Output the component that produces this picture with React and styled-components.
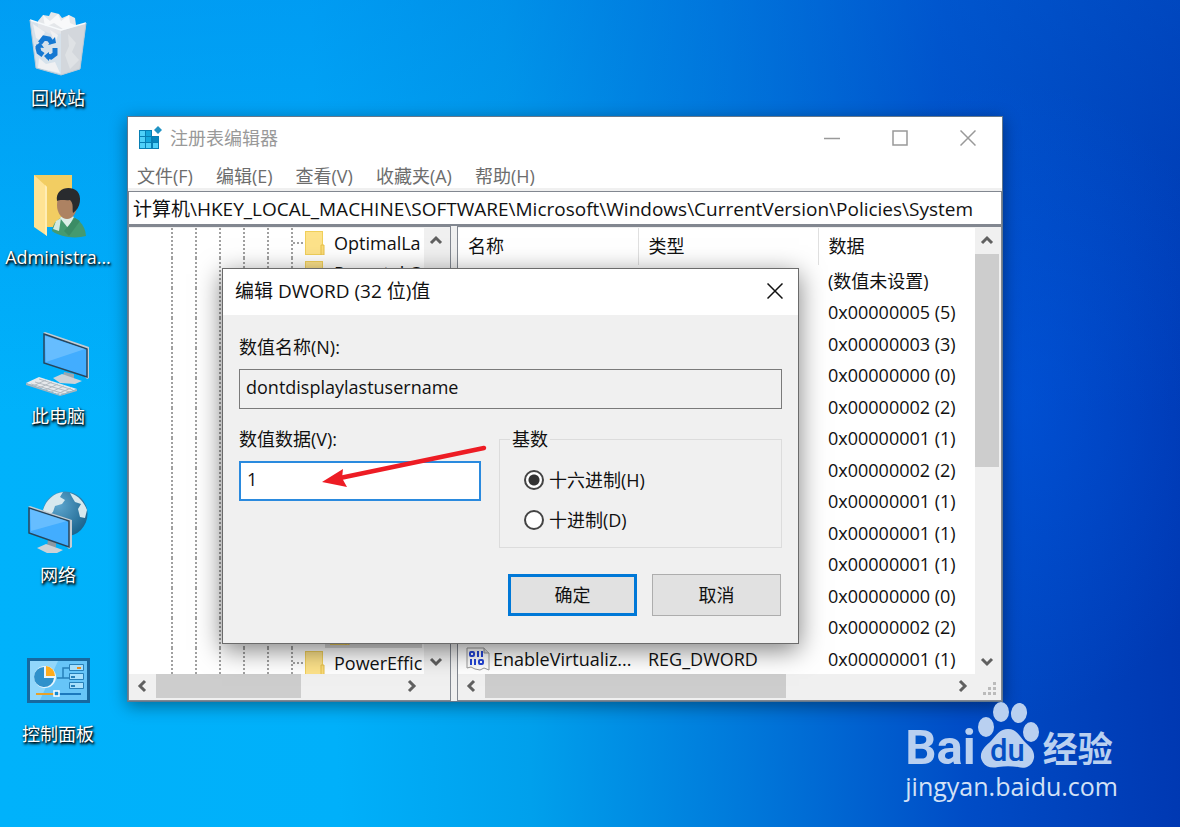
import React, { useState } from "react";
import styled, { createGlobalStyle } from "styled-components";

const GlobalStyle = createGlobalStyle`
  * {
    box-sizing: border-box;
  }
  body {
    margin: 0;
    font-family: "Open Sans", "Noto Sans CJK SC", sans-serif;
    font-size: 18px;
    line-height: 24px;
    color: #111;
  }
  button, input {
    font: inherit;
    color: inherit;
  }
`;

const Desktop = styled.div`
  position: relative;
  min-height: 100vh;
  overflow: hidden;
  background:
    radial-gradient(ellipse 240px 320px at 1010px 400px, rgba(0, 96, 240, 0.4), transparent),
    linear-gradient(180deg, rgba(0, 110, 225, 0.3), transparent 50%),
    linear-gradient(88deg, #00b2fb 0%, #00b0fa 28%, #00a0ec 44%, #0078da 62%, #004cc6 80%, #0036b0 100%);
`;

const Shortcuts = styled.nav`
  display: flex;
  flex-direction: column;
  width: 116px;
  padding-top: 12px;
`;

const Shortcut = styled.button`
  display: flex;
  flex-direction: column;
  align-items: center;
  gap: 10px;
  height: 159px;
  padding: 0;
  border: 0;
  background: none;
  color: #fff;
  white-space: nowrap;
  text-shadow: 1px 1px 2px #000, 1px 2px 3px #000;
`;

const Window = styled.section`
  position: absolute;
  left: 127px;
  top: 116px;
  width: min(876px, calc(100vw - 135px));
  border: 1px solid #64788c;
  background: #f0f0f0;
  box-shadow: 0 4px 16px rgba(0, 0, 0, 0.4);
`;

const TitleBar = styled.header`
  display: flex;
  align-items: center;
  height: 43px;
  padding: 0 0 2px 10px;
  background: #fff;
  color: #999;
`;

const Title = styled.h1`
  flex: 1;
  margin: 0;
  padding-left: 8px;
  font-size: 18px;
  font-weight: 400;
`;

const CaptionButton = styled.button`
  display: grid;
  place-items: center;
  width: 68px;
  height: 40px;
  padding: 0;
  border: 0;
  background: none;
  color: ${(props) => (props.$dark ? "#111" : "#999")};
`;

const MenuBar = styled.div`
  display: flex;
  gap: 23px;
  height: 31px;
  padding: 4px 9px 0;
  border-bottom: 3px solid #f0f0f0;
  background: #fff;
`;

const MenuItem = styled.button`
  padding: 0;
  border: 0;
  background: none;
  color: #6d6d6d;
  line-height: 24px;
  white-space: nowrap;
`;

const Address = styled.input`
  display: block;
  width: 100%;
  height: 35px;
  padding: 0 4px;
  border: 1px solid #828790;
  border-bottom-width: 2px;
  outline: 0;
  background: #fff;
  font-size: 19px;
`;

const Panes = styled.div`
  display: grid;
  grid-template-columns: 323fr 545fr;
  gap: 6px;
`;

const Pane = styled.div`
  display: grid;
  grid-template-columns: 1fr 24px;
  grid-template-rows: 1fr 24px;
  min-width: 0;
  padding: 1px 2px 2px 0;
  border: 1px solid #828790;
  background: #f0f0f0;
`;

const Tree = styled.ul`
  contain: size;
  margin: 0;
  padding: 0;
  border-right: 2px solid #fff;
  overflow: hidden;
  background: #fff;
  list-style: none;
`;

const Branch = styled.li`
  display: flex;
  align-items: center;
  height: 30px;
  overflow: hidden;
  white-space: nowrap;
`;

const Guide = styled.span`
  flex: none;
  align-self: stretch;
  width: 24px;
  border-left: 2px dotted #a0a0a0;
  &:first-child {
    margin-left: 42px;
  }
`;

const Twig = styled.span`
  flex: none;
  width: 10px;
  margin-left: -22px;
  border-top: 2px dotted #a0a0a0;
`;

const Node = styled.span`
  display: flex;
  align-items: center;
  gap: 9px;
  flex: 1 0 auto;
  align-self: stretch;
  margin-left: ${(props) => (props.$child ? "10px" : "0")};
  padding-left: ${(props) => (props.$child ? "5px" : "2px")};
  background: ${(props) => (props.$selected ? "#d9d9d9" : "none")};
`;

const ListArea = styled.div`
  overflow: hidden;
  background: #fff;
`;

const ValueTable = styled.table`
  width: 100%;
  table-layout: fixed;
  border-collapse: collapse;
  white-space: nowrap;

  th {
    height: 37px;
    padding: 0 10px 2px;
    border-right: 1px solid #e0e0e0;
    font-weight: 400;
    text-align: left;
  }
  th:last-child {
    border-right: 0;
  }
  th:nth-child(-n + 2) {
    width: 180px;
  }
  td {
    height: 31px;
    padding: 0 0 0 10px;
    overflow: hidden;
  }
  tr:nth-child(even) td {
    height: 32px;
  }
  td:first-child {
    padding-left: 8px;
  }
`;

const ValueName = styled.span`
  display: flex;
  align-items: center;
  gap: 3px;
`;

const Scroll = styled.div`
  display: flex;
  flex-direction: ${(props) => (props.$vertical ? "column" : "row")};
  background: #f0f0f0;
`;

const ScrollButton = styled.button`
  display: grid;
  place-items: center;
  flex: none;
  width: ${(props) => (props.$vertical ? "24px" : "27px")};
  height: ${(props) => (props.$vertical ? "26px" : "24px")};
  padding: 0;
  border: 0;
  background: none;
  color: #606060;
`;

const Track = styled.div`
  flex: 1;
`;

const Thumb = styled.div`
  width: ${(props) => (props.$vertical ? "100%" : props.$size)};
  height: ${(props) => (props.$vertical ? props.$size : "100%")};
  background: #cdcdcd;
`;

const Corner = styled.div`
  display: grid;
  place-items: end;
  padding: 2px;
`;

const Dialog = styled.form`
  position: absolute;
  left: 222px;
  top: 268px;
  width: 577px;
  border: 1px solid #6b6b6b;
  background: #f0f0f0;
  box-shadow: 0 6px 24px rgba(0, 0, 0, 0.5);
`;

const DialogTitle = styled.header`
  display: flex;
  align-items: center;
  height: 46px;
  padding: 0 0 2px 12px;
  background: #fff;
  h2 {
    flex: 1;
    margin: 0;
    font-size: 19px;
    font-weight: 400;
  }
  button {
    width: 46px;
  }
`;

const DialogBody = styled.div`
  display: flex;
  flex-direction: column;
  gap: 18px;
  padding: 20px 16px 27px;
`;

const Field = styled.div`
  display: flex;
  flex-direction: column;
  gap: 10px;
`;

const TextBox = styled.input`
  width: 100%;
  height: 40px;
  padding: 0 6px 5px;
  border: ${(props) => (props.readOnly ? "1px solid #7a7a7a" : "2px solid #2a8ade")};
  outline: 0;
  background: ${(props) => (props.readOnly ? "#f0f0f0" : "#fff")};
`;

const Columns = styled.div`
  display: grid;
  grid-template-columns: 242fr 283fr;
  gap: 18px;
`;

const Group = styled.fieldset`
  min-width: 0;
  margin: 0;
  padding: 9px 10px 7px;
  border: 1px solid #dcdcdc;
  legend {
    padding: 0 2px;
  }
`;

const RadioLabel = styled.label`
  display: flex;
  align-items: center;
  gap: 5px;
  height: 40px;
  padding-left: 14px;
`;

const Radio = styled.input.attrs({ type: "radio" })`
  appearance: none;
  width: 20px;
  height: 20px;
  margin: 0;
  border: 2px solid #444;
  border-radius: 50%;
  background: #fff;
  &:checked {
    background: radial-gradient(circle, #333 5px, #fff 6px);
  }
`;

const Buttons = styled.div`
  display: flex;
  justify-content: flex-end;
  gap: 15px;
  padding: 8px 1px 0;
`;

const PushButton = styled.button`
  width: 129px;
  height: 42px;
  padding: 0;
  border: ${(props) => (props.$primary ? "3px solid #0078d7" : "1px solid #adadad")};
  background: #e1e1e1;
`;

const Arrow = styled.svg`
  position: absolute;
  left: 320px;
  top: 442px;
  pointer-events: none;
`;

const Watermark = styled.div`
  position: absolute;
  right: 62px;
  bottom: 24px;
  color: #b9d0f0;
`;

const Brand = styled.div`
  display: flex;
  align-items: flex-end;
  height: 67px;
  font: 700 49px/42px Roboto, "Noto Sans CJK SC", sans-serif;
  svg {
    margin: 0 3px 0 2px;
  }
`;

const BrandCn = styled.span`
  font-size: 35px;
  line-height: 36px;
`;

const SiteLink = styled.a`
  display: block;
  color: #d3e1f6;
  font-size: 25px;
  line-height: 34px;
  text-decoration: none;
`;

const BinIcon = () => (
  <svg width="64" height="64" viewBox="0 0 64 64" aria-hidden="true">
    <path d="M12 9 17 3l6 1 2-4 8 2 3 4 7-3 6 3 1 7 6 3-5 5-26 1-13-6z" fill="#e4e7ea" />
    <path d="m17 3 7 6 8-7 3 7 8-6 1 8 7 3-14 3-9-6-9 4z" fill="#f8f9fa" />
    <path d="m4 8 31 11 25-8-6 46-19 6-25-7z" fill="#e3e6ea" opacity=".94" />
    <path d="m35 19 25-8-6 46-19 6z" fill="#d3d7dc" />
    <path d="m7 12 12 8-4 9-5-3zM24 18l8 5-3 9zM13 46l7 6 9-2 5 11-22-5z" fill="#f0f1f3" />
    <path d="m42 22 8 9-4 9 7 8-9 9-5-14 4-9z" fill="#dfe2e5" />
    <path d="m4 8 31 10 25-7" fill="none" stroke="#f7fafc" strokeWidth="1.500" />
    <path d="m4 8 6 48 25 7 19-6 6-46" fill="none" stroke="#b9c9d6" strokeWidth="1" />
    <g fill="none" stroke="#1478d2" strokeWidth="5">
      <path d="m14 31 4-5 5 1 3 4" />
      <path d="m29 36 0 6-4 3-4-1" />
      <path d="m17 43-4-3-1-4 1-3" />
    </g>
    <path d="m22 33 8-2-1-6zM23 40l-5 4 5 5zM9 35l5-5 4 6z" fill="#1478d2" />
  </svg>
);

const UserFolderIcon = () => (
  <svg width="64" height="64" viewBox="0 0 64 64" overflow="visible" aria-hidden="true">
    <path d="M8 4h38v52H8z" fill="#f2cd62" />
    <path d="m8 4 13 12v49L8 56z" fill="#ffe394" />
    <path d="m19 14 2 2v49l-2-2z" fill="#ffedb5" />
    <path d="M26 60c1-10 8-13 15-16 10 3 18 8 19 21-11 3-26 1-34-5z" fill="#459a70" />
    <path d="m34 47 8 10 6-11-5-3-6 1z" fill="#dceee8" />
    <path d="m27 58 3-8 5-3-2 13z" fill="#d2e9e2" />
    <path d="m38 60 11-13 5 3-11 15z" fill="#3b8c65" />
    <ellipse cx="41" cy="34" rx="10" ry="14" fill="#ad8262" />
    <path d="M31 30c-2-13 13-16 20-10 5 5 4 17-4 22-1-5 1-9-3-13-4 1-9-1-13 1z" fill="#292b2e" />
  </svg>
);

const Screen = ({ points, shine }) => (
  <>
    <polygon points={points} fill="#42adff" stroke="#27465d" strokeWidth="1.500" />
    <polygon points={shine} fill="#7ac6ff" opacity=".65" />
  </>
);

const ComputerIcon = () => (
  <svg width="64" height="64" viewBox="0 0 64 64" overflow="visible" aria-hidden="true">
    <path d="m38 42 10 2v6H36z" fill="#9ca7b0" />
    <path d="m27 48 9-4 20 7-7 3-15-1z" fill="#ced3d8" />
    <path d="m17 3 2-1 44 15v31l-2 1z" fill="#c4cdd4" />
    <Screen points="18,4 61,19 61,47 18,33" shine="19,6 59,19 20,32" />
    <path d="m0 53 13-6 38 12-17 6z" fill="#e6e9ec" />
    <path d="m0 53 34 12 17-6v2l-17 5L0 55z" fill="#aab4bc" />
    <path d="m5 54 34 10M9 52l35 10M13 49l34 11M7 56l13-6m-7 8 13-6m-7 8 13-6m-7 8 13-6m-7 8 14-6" stroke="#b3bbc2" strokeWidth="1" />
  </svg>
);

const NetworkIcon = () => (
  <svg width="64" height="64" viewBox="0 0 64 64" aria-hidden="true">
    <defs>
      <radialGradient id="globe" cx=".35" cy=".3" r=".8">
        <stop offset="0" stopColor="#5da6cf" />
        <stop offset="1" stopColor="#175f88" />
      </radialGradient>
    </defs>
    <circle cx="39" cy="25" r="22.500" fill="url(#globe)" />
    <path d="M17 21C20 11 28 4 37 3l-3 5 5 3-3 4-7 2-2 6-5 4zM44 4c9 3 14 9 17 17l-2 8-5-1-2-8 3-5-6-2-3-5zM28 26l6 2-4 4z" fill="#d6e8ee" />
    <path d="m22 50 8 2v6h-9z" fill="#8b99a3" />
    <path d="m11 59 9-4 17 6-6 3H21z" fill="#ccd2d7" />
    <path d="m2 18 2-1 42 14v27l-3 2z" fill="#c4cdd4" />
    <Screen points="3,19 43,32 43,58 3,44" shine="4,20 41,32 5,42" />
  </svg>
);

const ControlPanelIcon = () => (
  <svg width="64" height="64" viewBox="0 0 64 64" aria-hidden="true">
    <path d="M1 10h63v45H1z" fill="#1769a0" />
    <path d="M4 13h57v39H4z" fill="#67c5f8" />
    <path d="M4 13h28L14 52H4z" fill="#91d7fb" />
    <circle cx="19" cy="29" r="11" fill="#e6f5fd" />
    <path d="M18 19a10 10 0 1 0 10 11H18z" fill="#2f91cb" />
    <path d="M20 18a10 10 0 0 1 9 10h-9z" fill="#ffac1c" />
    <path d="M31 30h6V20h6m-6 10h6" fill="none" stroke="#2780b9" strokeWidth="1.500" />
    <g fill="#a7e0fc" stroke="#2780b9">
      <path d="M43.500 16.500h14v6h-14zM43.500 25.500h14v6h-14zM43.500 34.500h14v6h-14z" />
    </g>
    <path d="M51 20h4" stroke="#e98b1f" strokeWidth="2" />
    <path d="M45 29h4m-4 9h4" stroke="#2780b9" strokeWidth="2" />
    <path d="M10 46h20" stroke="#e7a129" strokeWidth="2" />
    <path d="M32 46h23" stroke="#1a78bd" strokeWidth="2" />
    <path d="M28 43h5v5h-5z" fill="#168bd3" stroke="#fff" strokeWidth="1.500" />
  </svg>
);

const RegeditIcon = () => (
  <svg width="24" height="24" viewBox="0 0 24 24" aria-hidden="true">
    <path d="M1 4h13v6h7v13H1z" fill="#087fb4" />
    <path d="M2 5h5v5H2zM2 11h5v5H2zM2 17h5v5H2zM8 17h5v5H8zM15 17h5v5h-5z" fill="#4fd0f8" />
    <path d="M8 5h5v5H8zM8 11h5v5H8z" fill="#15a7dc" />
    <path d="M15 11h5v5h-5z" fill="#0786bd" />
    <path d="m20 0 4 4-4 4-4-4z" fill="#2193c4" />
  </svg>
);

const FolderIcon = () => (
  <svg width="20" height="24" viewBox="0 0 20 24" aria-hidden="true">
    <path d="M0 0h18v24H0z" fill="#f0cf5a" />
    <path d="M1 1h16v22H1z" fill="#fde28a" />
    <path d="M16 14h3v10h-3z" fill="#fbdc78" stroke="#e6c04a" />
  </svg>
);

// little page with two rows of bits
const BinaryIcon = () => (
  <svg width="24" height="24" viewBox="0 0 24 24" aria-hidden="true">
    <path d="M1 1h17l5 5v17l-5-2-4 2-5-1-4-2-4 1z" fill="#fff" stroke="#9a9a9a" />
    <path d="M18 1v5h5" fill="#ddd" stroke="#9a9a9a" />
    <g fill="none" stroke="#2546d8" strokeWidth="2">
      <rect x="4" y="5" width="4" height="4" rx="1" />
      <path d="M12 4v6m4-6v6M5 12v6m4-6v6" />
      <rect x="13" y="13" width="4" height="4" rx="1" />
    </g>
  </svg>
);

const CloseGlyph = () => (
  <svg width="16" height="16" viewBox="0 0 16 16" aria-hidden="true">
    <path d="m.5.5 15 15m0-15-15 15" stroke="currentColor" strokeWidth="1.500" />
  </svg>
);

const chevrons = {
  up: "m2 9 5-5 5 5",
  down: "m2 5 5 5 5-5",
  left: "m9 2-5 5 5 5",
  right: "m5 2 5 5-5 5",
};

const Chevron = ({ dir }) => (
  <svg width="14" height="14" viewBox="0 0 14 14" aria-hidden="true">
    <path d={chevrons[dir]} fill="none" stroke="currentColor" strokeWidth="3" />
  </svg>
);

const ScrollBar = ({ vertical, size }) => (
  <Scroll $vertical={vertical}>
    <ScrollButton type="button" $vertical={vertical} aria-label={vertical ? "向上滚动" : "向左滚动"}>
      <Chevron dir={vertical ? "up" : "left"} />
    </ScrollButton>
    <Track>{size && <Thumb $vertical={vertical} $size={size} />}</Track>
    <ScrollButton type="button" $vertical={vertical} aria-label={vertical ? "向下滚动" : "向右滚动"}>
      <Chevron dir={vertical ? "down" : "right"} />
    </ScrollButton>
  </Scroll>
);

const shortcuts = [
  ["回收站", BinIcon],
  ["Administra...", UserFolderIcon],
  ["此电脑", ComputerIcon],
  ["网络", NetworkIcon],
  ["控制面板", ControlPanelIcon],
];

const menus = ["文件(F)", "编辑(E)", "查看(V)", "收藏夹(A)", "帮助(H)"];

const branches = [
  { name: "OptimalLa" },
  { name: "Parental C" },
  { name: "Personaliz" },
  { name: "PhotoProp" },
  { name: "PlayReady" },
  { name: "Policies" },
  { name: "ActiveD", child: true },
  { name: "Attach", child: true },
  { name: "DataC", child: true },
  { name: "Explor", child: true },
  { name: "NonE", child: true },
  { name: "Rating", child: true },
  { name: "Servic", child: true },
  { name: "System", child: true, selected: true },
  { name: "PowerEffic" },
];

const values = [
  ["(默认)", "REG_SZ", "(数值未设置)"],
  ["ConsentPro...", "REG_DWORD", "0x00000005 (5)"],
  ["ConsentPro...", "REG_DWORD", "0x00000003 (3)"],
  ["dontdisplay...", "REG_DWORD", "0x00000000 (0)"],
  ["DSCAutom...", "REG_DWORD", "0x00000002 (2)"],
  ["EnableCurs...", "REG_DWORD", "0x00000001 (1)"],
  ["EnableFull...", "REG_DWORD", "0x00000002 (2)"],
  ["EnableInst...", "REG_DWORD", "0x00000001 (1)"],
  ["EnableLUA", "REG_DWORD", "0x00000001 (1)"],
  ["EnableSecu...", "REG_DWORD", "0x00000001 (1)"],
  ["EnableUIA...", "REG_DWORD", "0x00000000 (0)"],
  ["EnableUwp...", "REG_DWORD", "0x00000002 (2)"],
  ["EnableVirtualiz...", "REG_DWORD", "0x00000001 (1)"],
];

const RegistryWindow = () => (
  <Window aria-label="注册表编辑器">
    <TitleBar>
      <RegeditIcon />
      <Title>注册表编辑器</Title>
      <CaptionButton aria-label="最小化">
        <svg width="16" height="16" viewBox="0 0 16 16" aria-hidden="true">
          <path d="M0 8.500h16" stroke="currentColor" strokeWidth="1.500" />
        </svg>
      </CaptionButton>
      <CaptionButton aria-label="最大化">
        <svg width="16" height="16" viewBox="0 0 16 16" aria-hidden="true">
          <path d="M1 1h14v14H1z" fill="none" stroke="currentColor" strokeWidth="1.500" />
        </svg>
      </CaptionButton>
      <CaptionButton aria-label="关闭">
        <CloseGlyph />
      </CaptionButton>
    </TitleBar>
    <MenuBar>
      {menus.map((menu) => (
        <MenuItem key={menu}>{menu}</MenuItem>
      ))}
    </MenuBar>
    <Address
      aria-label="地址"
      defaultValue="计算机\HKEY_LOCAL_MACHINE\SOFTWARE\Microsoft\Windows\CurrentVersion\Policies\System"
    />
    <Panes>
      <Pane>
        <Tree>
          {branches.map(({ name, child, selected }) => (
            <Branch key={name}>
              <Guide /><Guide /><Guide /><Guide /><Guide /><Guide />
              {!child && <Twig />}
              <Node $child={child} $selected={selected}>
                <FolderIcon />
                {name}
              </Node>
            </Branch>
          ))}
        </Tree>
        <ScrollBar vertical />
        <ScrollBar size="60%" />
      </Pane>
      <Pane>
        <ListArea>
          <ValueTable>
            <thead>
              <tr>
                <th>名称</th>
                <th>类型</th>
                <th>数据</th>
              </tr>
            </thead>
            <tbody>
              {values.map(([name, type, data], i) => (
                <tr key={i}>
                  <td>
                    <ValueName>
                      <BinaryIcon />
                      {name}
                    </ValueName>
                  </td>
                  <td>{type}</td>
                  <td>{data}</td>
                </tr>
              ))}
            </tbody>
          </ValueTable>
        </ListArea>
        <ScrollBar vertical size="54%" />
        <ScrollBar size="65%" />
        <Corner>
          <svg width="14" height="14" viewBox="0 0 14 14" aria-hidden="true">
            <path d="M10 0h3v3h-3zM10 5h3v3h-3zM10 10h3v3h-3zM5 5h3v3H5zM5 10h3v3H5zM0 10h3v3H0z" fill="#bbb" />
          </svg>
        </Corner>
      </Pane>
    </Panes>
  </Window>
);

const EditDialog = () => {
  const [base, setBase] = useState("hex");
  const [value, setValue] = useState("1");

  return (
    <Dialog role="dialog" aria-label="编辑 DWORD (32 位)值" onSubmit={(e) => e.preventDefault()}>
      <DialogTitle>
        <h2>编辑 DWORD (32 位)值</h2>
        <CaptionButton type="button" $dark aria-label="关闭">
          <CloseGlyph />
        </CaptionButton>
      </DialogTitle>
      <DialogBody>
        <Field>
          <label htmlFor="value-name">数值名称(N):</label>
          <TextBox id="value-name" readOnly value="dontdisplaylastusername" />
        </Field>
        <Columns>
          <Field>
            <label htmlFor="value-data">数值数据(V):</label>
            <TextBox id="value-data" value={value} onChange={(e) => setValue(e.target.value)} />
          </Field>
          <Group>
            <legend>基数</legend>
            <RadioLabel>
              <Radio name="base" checked={base === "hex"} onChange={() => setBase("hex")} />
              十六进制(H)
            </RadioLabel>
            <RadioLabel>
              <Radio name="base" checked={base === "dec"} onChange={() => setBase("dec")} />
              十进制(D)
            </RadioLabel>
          </Group>
        </Columns>
        <Buttons>
          <PushButton $primary>确定</PushButton>
          <PushButton type="button">取消</PushButton>
        </Buttons>
      </DialogBody>
    </Dialog>
  );
};

const App = () => (
  <Desktop>
    <GlobalStyle />
    <Shortcuts>
      {shortcuts.map(([label, Icon]) => (
        <Shortcut key={label}>
          <Icon />
          {label}
        </Shortcut>
      ))}
    </Shortcuts>
    <RegistryWindow />
    <EditDialog />
    <Arrow width="170" height="50" viewBox="0 0 170 50" aria-hidden="true">
      <path d="M164 6 20 36" stroke="#ed1c24" strokeWidth="4.500" strokeLinecap="round" />
      <path d="m2 40 21-13-1 9 5 9z" fill="#ed1c24" />
    </Arrow>
    <Watermark>
      <Brand>
        Bai
        <svg width="62" height="67" viewBox="0 0 62 67" fill="currentColor" aria-hidden="true">
          <ellipse cx="8" cy="25" rx="8" ry="10" />
          <ellipse cx="23" cy="10" rx="8" ry="10" />
          <ellipse cx="41" cy="11" rx="8" ry="10" transform="rotate(8 41 11)" />
          <ellipse cx="53" cy="30" rx="8" ry="10" />
          <path d="M30 27c8 0 11 6 16 12 6 6 11 9 10 17-2 9-9 11-16 9-7-1-13-1-20 0-8 2-15-1-17-9-1-8 5-12 10-17 6-7 9-12 17-12z" />
          <text x="12" y="59" fill="#0550c4" fontSize="31" fontWeight="500">du</text>
        </svg>
        <BrandCn>经验</BrandCn>
      </Brand>
      <SiteLink href="#">jingyan.baidu.com</SiteLink>
    </Watermark>
  </Desktop>
);

export default App;
